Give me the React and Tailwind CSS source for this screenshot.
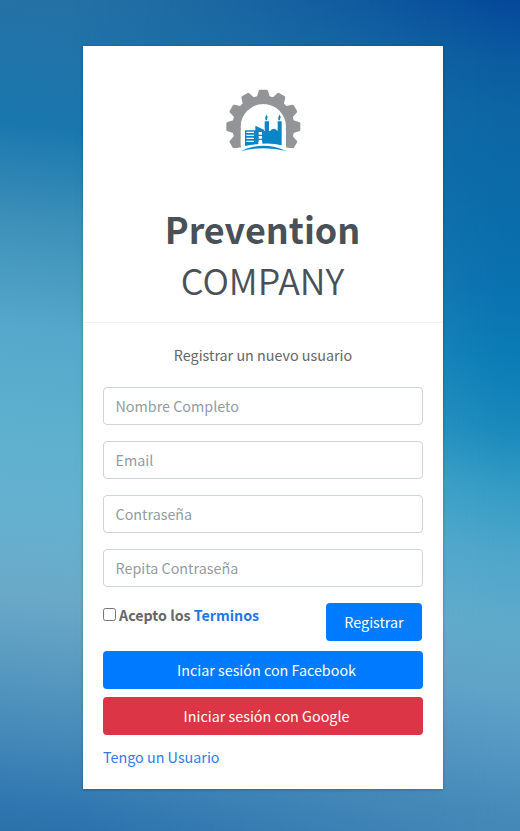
const teeth = [-120, -90, -60, -30, 0, 30, 60, 90, 120];

function Logo() {
  return (
    <svg className="h-[84px] w-[96px]" viewBox="0 0 288 252">
      <defs>
        <clipPath id="gear">
          <path d="M0 0H288V204H213V150H77V204H0Z" />
        </clipPath>
      </defs>
      <g clipPath="url(#gear)" fill="#929497">
        <circle cx="145" cy="140" r="80.5" fill="none" stroke="#929497" strokeWidth="25" />
        {teeth.map((a) => (
          <path key={a} d="M125 52L131 33Q132 29 135 29H155Q158 29 159 33L165 52Z" transform={`rotate(${a} 145 140)`} />
        ))}
      </g>
      <g fill="#0c84c8">
        <path d="M90 151H121V137L147 149V153H149V124H162V153H165Q176 139 188 153V124H200V196Q175 189 142 191V186H130V192Q108 193 90 198Z" />
        <path d="M77 214Q143 181 214 213Q143 196 77 214Z" />
        <path d="M152 121Q148 112 156 103Q154 111 159 110Q155 115 156 121ZM191 121Q187 112 195 103Q193 111 198 110Q194 115 195 121Z" />
      </g>
      <path d="M94 157H117M94 166H117M94 175H117M94 184H117" stroke="#fff" strokeWidth="4" />
      <path d="M131 156H141V164H131ZM131 168H141V176H131ZM131 180H141V188H131Z" fill="#fff" />
    </svg>
  );
}

const fields = ["Nombre Completo", "Email", "Contraseña", "Repita Contraseña"];

export default function App() {
  return (
    <div className="relative isolate h-[831px] w-[520px] bg-[linear-gradient(186deg,#2471a5_0%,#2471a5_6%,#1a77ae_20%,#3d90b8_31%,#56a8cb_43%,#5eb0cf_54%,#65b0cf_64%,#6ba9c8_73%,#5698bf_82%,#4489b8_89%,#2f76b0_97%,#2a72a9_100%)] px-[83px] pt-[46px] font-['Noto_Sans_CJK_SC',sans-serif] text-[14.34px] leading-6 text-[#666] before:absolute before:inset-0 before:-z-10 before:bg-[linear-gradient(187deg,#05489a_0%,#0b5ca0_7%,#0d66a3_13%,#0a6dab_26%,#0a72b0_33%,#0b7cb6_40%,#1989bb_48%,#359cc4_55%,#4ea6ca_62%,#5faacb_70%,#60a4c8_77%,#5497c3_84%,#458ab8_91%,#3f80b4_100%)] before:[mask-image:linear-gradient(to_right,transparent_14%,black_96%)] before:content-['']">
      <main className="h-[743px] w-[360px] bg-white shadow-[0_0_1px_rgba(0,0,0,.125),0_1px_3px_rgba(0,0,0,.2)]">
        <header className="flex h-[277px] flex-col items-center border-b border-black/5 pt-[34px] text-[#495057]">
          <Logo />
          <h1 className="mt-[39px] pr-px text-center text-[35.9px] leading-[51px]">
            <b className="block">Prevention</b>
            <span className="block font-['Noto_Sans_CJK_SC_DemiLight','Noto_Sans_CJK_SC',sans-serif] font-[350]">COMPANY</span>
          </h1>
        </header>
        <form className="px-5 pt-5">
          <p className="mb-5 text-center">Registrar un nuevo usuario</p>
          <div className="flex flex-col gap-4">
            {fields.map((f) => (
              <input key={f} placeholder={f} className="h-[38px] w-full rounded border border-[#ced4da] px-[11.5px] pb-0.5 placeholder:text-[#939ba2]" />
            ))}
          </div>
          <div className="mt-4 flex h-[38px] justify-between pr-px">
            <label className="flex h-6 items-start text-[14.25px] font-bold">
              <input type="checkbox" className="mt-[5px] mr-[3px] size-[13px]" />
              <span>Acepto los <a className="text-[#1f76e8]">Terminos</a></span>
            </label>
            <button type="button" className="h-[38px] w-24 rounded bg-[#007bff] text-white">Registrar</button>
          </div>
          <button type="button" className="mt-2.5 block h-[38px] w-full rounded bg-[#007bff] pl-[7px] text-white">Inciar sesión con Facebook</button>
          <button type="button" className="mt-2 block h-[38px] w-full rounded bg-[#dc3545] pl-[7px] text-white">Iniciar sesión con Google</button>
          <a className="mt-2.5 block text-[#2f7bea]">Tengo un Usuario</a>
        </form>
      </main>
    </div>
  );
}
